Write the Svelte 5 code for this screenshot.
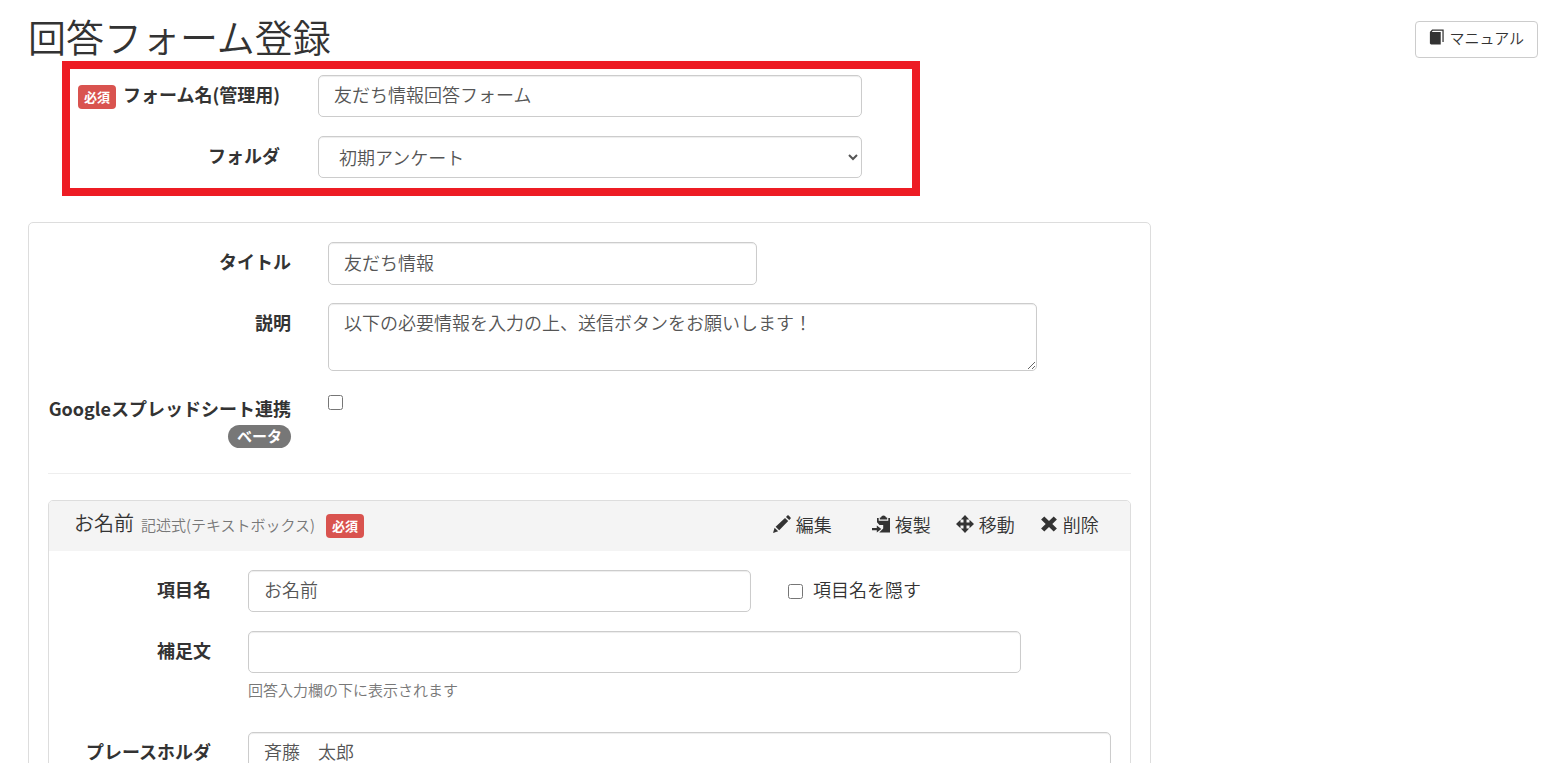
<script lang="ts">
	let formName = $state('友だち情報回答フォーム');
	let folder = $state('初期アンケート');
	let title = $state('友だち情報');
	let description = $state('以下の必要情報を入力の上、送信ボタンをお願いします！');
	let useSpreadsheet = $state(false);

	let item = $state({
		name: 'お名前',
		type: '記述式(テキストボックス)',
		hideName: false,
		note: '',
		placeholder: '斉藤\u3000太郎'
	});

	const folders = ['初期アンケート'];

	const actions = [
		{ id: 'edit', label: '編集' },
		{ id: 'copy', label: '複製' },
		{ id: 'move', label: '移動' },
		{ id: 'remove', label: '削除' }
	];
</script>

{#snippet icon(name: string)}
	<svg class="icon" viewBox="0 0 18 18" aria-hidden="true">
		{#if name === 'book'}
			<path d="M1 3.5 3.5.5H16.5V14.5h-1.4V2H4.2L3.2 3.5h10V17.5H2.2L1 16.2z" />
		{:else if name === 'edit'}
			<path d="M0 18 1.6 12.8 5.2 16.3zM2.6 11.7 12 2.9 15.2 6.1 6.2 15.3zM13 2 14.3.6q.7-.7 1.4 0l1.8 1.8q.7.7 0 1.4L16.2 5.1z" />
		{:else if name === 'copy'}
			<path d="M9 2.4Q9.3.5 11.5.5T14 2.4h1.2v2.2H7.8V2.4zM5 3h1.7v2.7h9.6V3H18v14.5H7.2l4-3.9V10H7.5L5 7.2zM4.8 10.6l4.5 3.3-4.5 3.5v-2.2H0v-2.1h4.8z" />
		{:else if name === 'move'}
			<path d="M9 0l4.2 4.5h-2.7v3h3V4.8L18 9l-4.5 4.2v-2.7h-3v3h2.7L9 18l-4.2-4.5h2.7v-3h-3v2.7L0 9l4.5-4.2v2.7h3v-3H4.8z" />
		{:else}
			<path d="M1.1 4.6 4.3 1.4 9 5.9l4.7-4.5 3.2 3.2L12.3 9l4.6 4.4-3.2 3.2L9 12.1l-4.7 4.5-3.2-3.2L5.7 9z" />
		{/if}
	</svg>
{/snippet}

<div class="page">
	<header>
		<h1>回答フォーム登録</h1>
		<a class="manual" href="/manual">{@render icon('book')}マニュアル</a>
	</header>

	<form>
		<div class="basic">
			<div class="row">
				<label for="form-name"><span class="required">必須</span>フォーム名(管理用)</label>
				<input id="form-name" class="control" type="text" bind:value={formName} />
			</div>
			<div class="row">
				<label for="folder">フォルダ</label>
				<select id="folder" class="control" bind:value={folder}>
					{#each folders as f}
						<option>{f}</option>
					{/each}
				</select>
			</div>
		</div>

		<section class="panel">
			<div class="row">
				<label for="title">タイトル</label>
				<input id="title" class="control title" type="text" bind:value={title} />
			</div>
			<div class="row">
				<label for="description">説明</label>
				<textarea id="description" class="control description" bind:value={description}></textarea>
			</div>
			<div class="row">
				<label for="spreadsheet">
					Googleスプレッドシート連携
					<span class="beta">ベータ</span>
				</label>
				<input id="spreadsheet" type="checkbox" bind:checked={useSpreadsheet} />
			</div>

			<hr />

			<article class="item">
				<div class="item-head">
					<h2>{item.name}</h2>
					<small>{item.type}</small>
					<span class="required">必須</span>
					<div class="actions">
						{#each actions as action}
							<button type="button" class={action.id}>{@render icon(action.id)}{action.label}</button>
						{/each}
					</div>
				</div>
				<div class="item-body">
					<div class="row">
						<label for="item-name">項目名</label>
						<div class="name-field">
							<input id="item-name" class="control" type="text" bind:value={item.name} />
							<label class="check">
								<input type="checkbox" bind:checked={item.hideName} />
								<span>項目名を隠す</span>
							</label>
						</div>
					</div>
					<div class="row">
						<label for="item-note">補足文</label>
						<div>
							<input id="item-note" class="control note" type="text" bind:value={item.note} />
							<p class="help">回答入力欄の下に表示されます</p>
						</div>
					</div>
					<div class="row">
						<label for="item-placeholder">プレースホルダ</label>
						<input id="item-placeholder" class="control" type="text" bind:value={item.placeholder} />
					</div>
				</div>
			</article>
		</section>
	</form>
</div>

<style>
	:global(body) {
		background: #fff;
	}

	.page,
	.page :global(*) {
		box-sizing: border-box;
	}

	.page {
		height: 100vh;
		overflow: hidden;
		font-family: 'Noto Sans CJK JP', sans-serif;
		font-size: 18px;
		font-weight: 350;
		line-height: 25px;
		color: #333;
	}

	header {
		display: flex;
		justify-content: space-between;
		align-items: flex-start;
		height: 61px;
		padding: 0 18px 0 28px;
	}

	h1 {
		margin: 15px 0 0;
		font-size: 38px;
		font-weight: 350;
		line-height: 42px;
	}

	.manual {
		display: flex;
		align-items: center;
		gap: 4px;
		height: 37px;
		margin-top: 21px;
		padding: 0 13px 5px;
		border: 1px solid #ccc;
		border-radius: 4px;
		font-size: 15px;
		line-height: 21px;
		color: #333;
		text-decoration: none;
	}

	.icon {
		width: 18px;
		height: 18px;
		flex: none;
		fill: #333;
	}

	.manual .icon {
		width: 16px;
		height: 16px;
	}

	form {
		padding: 0 31px 0 28px;
	}

	.basic {
		width: 57.3%;
		margin-left: 34px;
		padding: 6px 50px 10px 0;
		border: 8px solid #ed1c24;
	}

	.row {
		display: grid;
		grid-template-columns: 243px 1fr;
		column-gap: 37px;
		margin-bottom: 18px;
	}

	.basic .row {
		grid-template-columns: 210px 1fr;
		column-gap: 38px;
		margin-bottom: 19px;
	}

	.item-body .row {
		grid-template-columns: 143px 1fr;
		margin-bottom: 19px;
	}

	.basic .row:last-child {
		margin-bottom: 0;
	}

	.row > label {
		padding-top: 7px;
		font-weight: 700;
		text-align: right;
		white-space: nowrap;
	}

	.control {
		display: block;
		width: 100%;
		height: 42px;
		margin: 0;
		padding: 4px 15px 8px;
		border: 1px solid #ccc;
		border-radius: 5px;
		background: #fff;
		box-shadow: inset 0 1px 1px rgba(0, 0, 0, 0.075);
		font: inherit;
		color: #555;
	}

	select.control {
		padding: 6px 16px 7px;
	}

	.control.title {
		width: 53.4%;
		height: 43px;
	}

	.control.description {
		width: 88.3%;
		height: 68px;
		padding-top: 6px;
	}

	.control.note {
		width: 89.6%;
	}

	input[type='checkbox'] {
		width: 15px;
		height: 15px;
		margin: 0;
	}

	.row > input[type='checkbox'] {
		margin-top: 6px;
	}

	.required {
		display: inline-block;
		margin-right: 7px;
		padding: 0 6px;
		border-radius: 4px;
		background: #d9534f;
		font-size: 13px;
		font-weight: 700;
		line-height: 24px;
		color: #fff;
	}

	.panel {
		width: 75%;
		margin-top: 26px;
		padding: 19px;
		border: 1px solid #ddd;
		border-radius: 5px;
	}

	.beta {
		display: table;
		margin: 4px 0 0 auto;
		padding: 0 9px 1px;
		border-radius: 12px;
		background: #777;
		font-size: 15px;
		line-height: 22px;
		color: #fff;
	}

	hr {
		margin: 25px 0 26px;
		border: 0;
		border-top: 1px solid #eee;
	}

	.item {
		border: 1px solid #ddd;
		border-radius: 5px;
	}

	.item-head {
		display: flex;
		align-items: center;
		height: 50px;
		padding: 0 31px 0 25px;
		background: #f4f4f4;
		border-radius: 4px 4px 0 0;
	}

	h2 {
		margin: 0 7px 7px 0;
		font-size: 20px;
		font-weight: 350;
	}

	small {
		margin: 0 11px 4px 0;
		font-size: 15px;
		color: #777;
	}

	.actions {
		display: flex;
		gap: 25px;
		margin: 0 0 4px auto;
	}

	.actions button {
		display: flex;
		align-items: center;
		gap: 5px;
		padding: 0;
		border: 0;
		background: none;
		font: inherit;
		color: #333;
		cursor: pointer;
	}

	.actions .edit {
		margin-right: 15px;
	}

	.item-body {
		padding: 19px;
	}

	.name-field {
		display: flex;
		align-items: center;
	}

	.name-field .control {
		width: 58.3%;
	}

	.check {
		display: flex;
		align-items: center;
		gap: 10px;
		margin-left: 37px;
	}

	.check span {
		padding-bottom: 4px;
	}

	.help {
		margin: 4px 0 11px;
		font-size: 15px;
		color: #777;
	}
</style>
